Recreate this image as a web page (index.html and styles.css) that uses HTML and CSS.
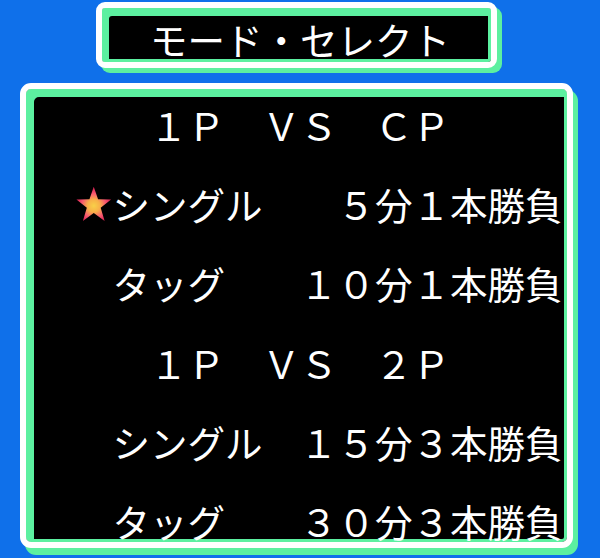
FILE: index.html
```html
<!DOCTYPE html>
<html lang="ja">
<head>
<meta charset="utf-8">
<title>モード・セレクト</title>
<link rel="stylesheet" href="styles.css">
</head>
<body>
<div class="screen">
  <div class="title">モード・セレクト</div>
  <div class="panel">
    <div class="row"><span class="cur"></span><span class="txt">　１Ｐ　ＶＳ　ＣＰ</span></div>
    <div class="row"><span class="cur"><svg class="star" viewBox="0 0 40 40" width="38" height="38"><defs><radialGradient id="sg" cx="50%" cy="56%" r="52%"><stop offset="0" stop-color="#f8d048"/><stop offset="0.35" stop-color="#f8b048"/><stop offset="0.68" stop-color="#f85870"/><stop offset="1" stop-color="#d82050"/></radialGradient></defs><polygon points="20,1.5 24.6,15 38.5,15.3 27.4,24 31.6,38 20,29.6 8.4,38 12.6,24 1.5,15.3 15.4,15" fill="url(#sg)"/></svg></span><span class="txt">シングル　　５分１本勝負</span></div>
    <div class="row"><span class="cur"></span><span class="txt">タッグ　　１０分１本勝負</span></div>
    <div class="row"><span class="cur"></span><span class="txt">　１Ｐ　ＶＳ　２Ｐ</span></div>
    <div class="row"><span class="cur"></span><span class="txt">シングル　１５分３本勝負</span></div>
    <div class="row"><span class="cur"></span><span class="txt">タッグ　　３０分３本勝負</span></div>
  </div>
</div>
</body>
</html>
```

FILE: styles.css
```css
html, body {
  margin: 0;
  padding: 0;
  background: #0f70ea;
}

.screen {
  width: 600px;
  height: 558px;
  overflow: hidden;
  box-sizing: border-box;
  padding-top: 2px;
  display: flex;
  flex-direction: column;
  align-items: flex-start;
  font-family: "Noto Sans CJK JP", "Noto Sans", sans-serif;
  color: #fff;
}

.title {
  margin-left: 96px;
  width: 401px;
  height: 66px;
  box-sizing: border-box;
  border: 6px solid #fff;
  border-radius: 9px;
  background: #000;
  box-shadow: 5px 5px 0 #5cf0a0, inset 7px 8px 0 #5cf0a0, inset 0 0 0 3px #5cf0a0;
  padding: 8px 0 0 7px;
  display: flex;
  align-items: center;
  justify-content: center;
  font-size: 37.5px;
  line-height: 37.5px;
  white-space: pre;
}

.panel {
  margin: 15px 0 0 20px;
  width: 553px;
  height: 465px;
  box-sizing: border-box;
  border: 6px solid #fff;
  border-radius: 11px;
  background: #000;
  box-shadow: 5px 7px 0 #5cf0a0, inset 8px 8px 0 #5cf0a0, inset 0 0 0 3px #5cf0a0;
  padding: 17px 0 0 49px;
  display: flex;
  flex-direction: column;
  gap: 41.7px;
}

.row {
  display: flex;
  height: 37.5px;
  font-size: 37.5px;
  line-height: 37.5px;
  white-space: pre;
}

.cur {
  width: 37.5px;
  height: 37.5px;
  flex: none;
  display: flex;
  align-items: center;
  justify-content: center;
}

.star {
  display: block;
}
```
